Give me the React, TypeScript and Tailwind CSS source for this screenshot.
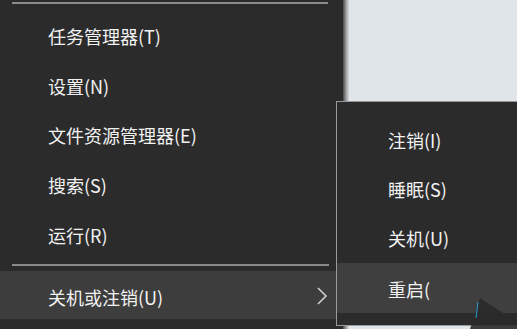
import React from "react";

const mainItems = ["任务管理器(T)", "设置(N)", "文件资源管理器(E)", "搜索(S)", "运行(R)"];
const subItems = ["注销(I)", "睡眠(S)", "关机(U)"];

export default function App() {
  return (
    <div
      className="relative flex w-[517px] h-[329px] overflow-hidden bg-[#dfe5e8] text-[18px] text-[#f2f2f2]"
      style={{ fontFamily: '"Noto Sans CJK SC", "Noto Sans", sans-serif' }}
    >
      <div className="flex flex-col w-[343px] h-full bg-[#2b2b2b]">
        <div className="mt-[2px] h-[2px] ml-[12px] mr-[15px] bg-[#8a8a8a]" />
        <div className="mt-[7px] flex flex-col">
          {mainItems.map((t) => (
            <div key={t} className="h-[49.7px] flex items-center pl-[48px] leading-none">
              {t}
            </div>
          ))}
        </div>
        <div className="mt-[5px] h-[2px] ml-[12px] mr-[14px] bg-[#8a8a8a]" />
        <div className="mt-[5px] h-[48px] flex items-center justify-between pl-[48px] pr-[15px] pt-[4px] bg-[#3d3d3d] leading-none">
          <span>关机或注销(U)</span>
          <svg width="12" height="18" viewBox="0 0 12 18" className="mt-[-3px]">
            <path d="M2 1 L10 9 L2 17" fill="none" stroke="#d0d0d0" strokeWidth="1.6" />
          </svg>
        </div>
      </div>
      <div className="w-[6px] h-full bg-gradient-to-r from-[#4a4a4a] via-[#9c9c9c] to-[#d5dbde]" />
      <div className="flex-1" />

      <div className="absolute left-[336px] top-[101px] w-[181px] h-[225px] border border-r-0 border-[#9a9a9a] bg-[#2b2b2b] flex flex-col">
        <div className="pt-[13px] flex flex-col">
          {subItems.map((t) => (
            <div key={t} className="h-[49.3px] flex items-center pl-[51px] leading-none">
              {t}
            </div>
          ))}
          <div className="h-[50px] flex items-center pl-[51px] pt-[2px] bg-[#3f3f3f] leading-none">
            重启(
          </div>
        </div>
      </div>

      <svg className="absolute left-[462px] top-[296px]" width="55" height="33" viewBox="0 0 55 33">
        <path d="M18 2 L55 26 L55 33 L8 33 Z" fill="#2a2a2a" opacity="0.9" />
        <path d="M16 6 L14 22" stroke="#2a9fd0" strokeWidth="1" fill="none" />
      </svg>
    </div>
  );
}
